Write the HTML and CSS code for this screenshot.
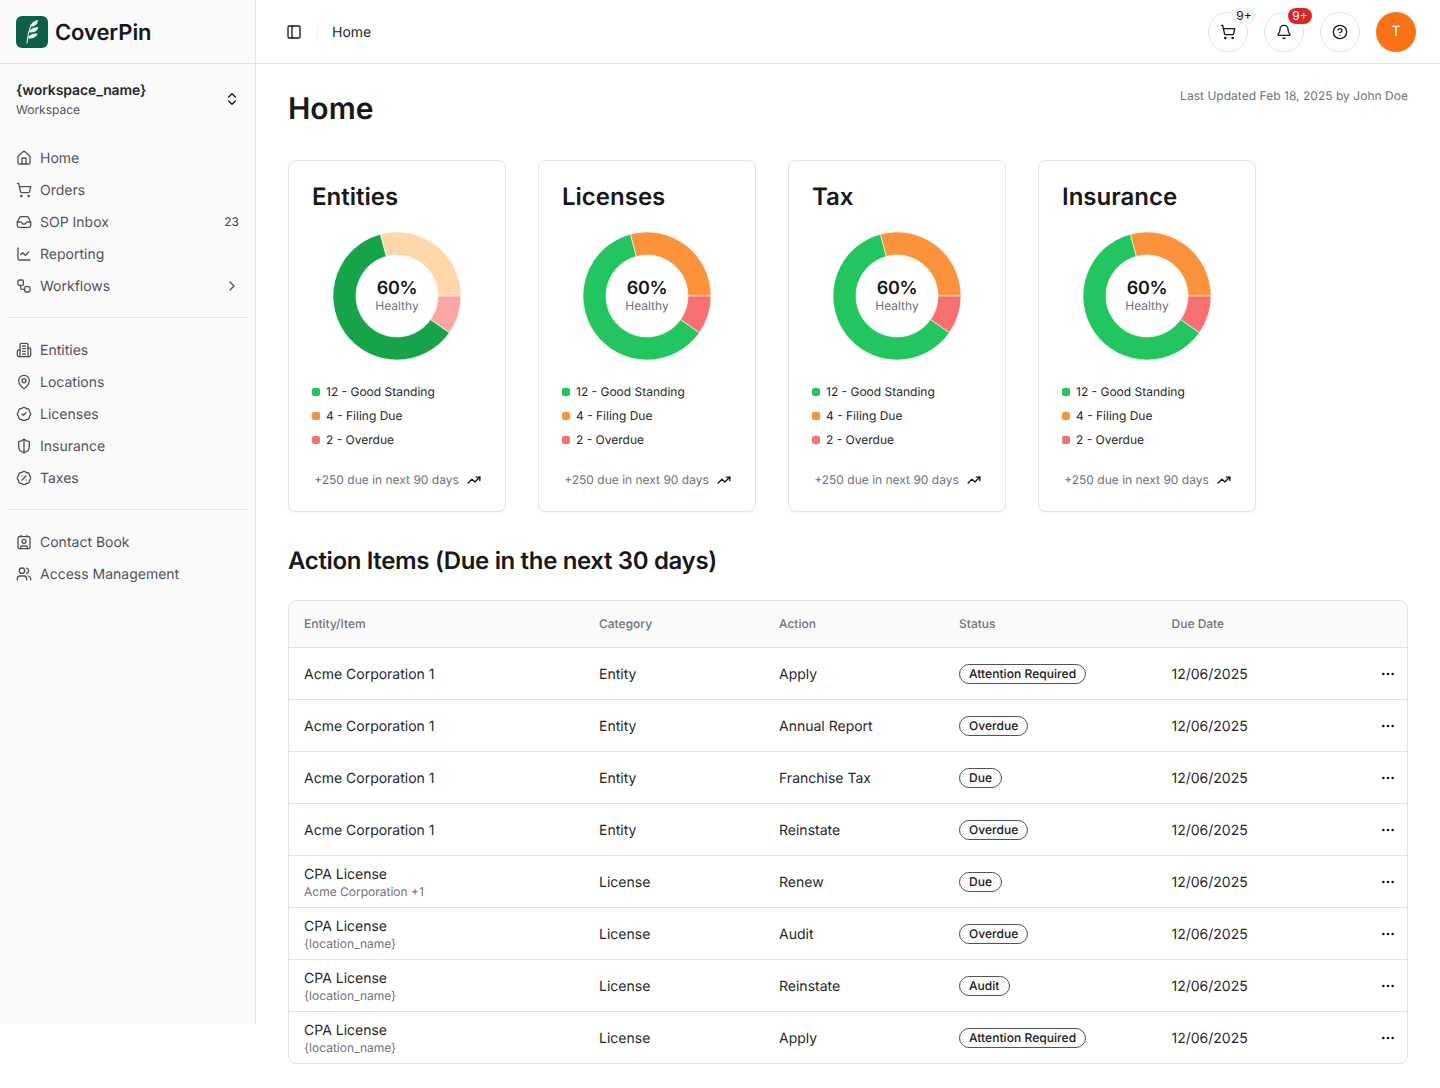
FILE: index.html
```html
<!DOCTYPE html>
<html lang="en">
<head>
<meta charset="utf-8">
<title>CoverPin</title>
<link rel="stylesheet" href="styles.css">
</head>
<body>
<svg class="defs" width="0" height="0" aria-hidden="true">
<defs>
<symbol id="i-home" viewBox="0 0 24 24"><path d="M15 21v-8a1 1 0 0 0-1-1h-4a1 1 0 0 0-1 1v8"/><path d="M3 10a2 2 0 0 1 .709-1.528l7-5.999a2 2 0 0 1 2.582 0l7 5.999A2 2 0 0 1 21 10v9a2 2 0 0 1-2 2H5a2 2 0 0 1-2-2z"/></symbol>
<symbol id="i-cart" viewBox="0 0 24 24"><circle cx="8" cy="21" r="1"/><circle cx="19" cy="21" r="1"/><path d="M2.05 2.05h2l2.66 12.42a2 2 0 0 0 2 1.58h9.78a2 2 0 0 0 1.95-1.57l1.65-7.43H5.12"/></symbol>
<symbol id="i-inbox" viewBox="0 0 24 24"><polyline points="22 12 16 12 14 15 10 15 8 12 2 12"/><path d="M5.45 5.11 2 12v6a2 2 0 0 0 2 2h16a2 2 0 0 0 2-2v-6l-3.45-6.89A2 2 0 0 0 16.76 4H7.24a2 2 0 0 0-1.79 1.11z"/></symbol>
<symbol id="i-chart" viewBox="0 0 24 24"><path d="M3 3v16a2 2 0 0 0 2 2h16"/><path d="m19 9-5 5-4-4-3 3"/></symbol>
<symbol id="i-flow" viewBox="0 0 24 24"><rect width="8" height="8" x="3" y="3" rx="2"/><path d="M7 11v4a2 2 0 0 0 2 2h4"/><rect width="8" height="8" x="13" y="13" rx="2"/></symbol>
<symbol id="i-building" viewBox="0 0 24 24"><path d="M6 22V4a2 2 0 0 1 2-2h8a2 2 0 0 1 2 2v18Z"/><path d="M6 12H4a2 2 0 0 0-2 2v6a2 2 0 0 0 2 2h2"/><path d="M18 9h2a2 2 0 0 1 2 2v9a2 2 0 0 1-2 2h-2"/><path d="M10 6h4M10 10h4M10 14h4M10 18h4"/></symbol>
<symbol id="i-pin" viewBox="0 0 24 24"><path d="M20 10c0 4.993-5.539 10.193-7.399 11.799a1 1 0 0 1-1.202 0C9.539 20.193 4 14.993 4 10a8 8 0 0 1 16 0"/><circle cx="12" cy="10" r="3"/></symbol>
<symbol id="i-check" viewBox="0 0 24 24"><path d="M3.85 8.62a4 4 0 0 1 4.78-4.77 4 4 0 0 1 6.74 0 4 4 0 0 1 4.78 4.78 4 4 0 0 1 0 6.74 4 4 0 0 1-4.77 4.78 4 4 0 0 1-6.75 0 4 4 0 0 1-4.78-4.77 4 4 0 0 1 0-6.76Z"/><path d="m9 12 2 2 4-4"/></symbol>
<symbol id="i-shield" viewBox="0 0 24 24"><path d="M20 13c0 5-3.5 7.5-7.66 8.95a1 1 0 0 1-.67-.01C7.5 20.5 4 18 4 13V6a1 1 0 0 1 1-1c2 0 4.5-1.2 6.24-2.72a1.17 1.17 0 0 1 1.52 0C14.51 3.81 17 5 19 5a1 1 0 0 1 1 1z"/><path d="M12 22V2"/></symbol>
<symbol id="i-percent" viewBox="0 0 24 24"><path d="M3.85 8.62a4 4 0 0 1 4.78-4.77 4 4 0 0 1 6.74 0 4 4 0 0 1 4.78 4.78 4 4 0 0 1 0 6.74 4 4 0 0 1-4.77 4.78 4 4 0 0 1-6.75 0 4 4 0 0 1-4.78-4.77 4 4 0 0 1 0-6.76Z"/><path d="m15 9-6 6"/><path d="M9 9h.01"/><path d="M15 15h.01"/></symbol>
<symbol id="i-contact" viewBox="0 0 24 24"><path d="M16 2v2"/><path d="M7 22v-2a2 2 0 0 1 2-2h6a2 2 0 0 1 2 2v2"/><path d="M8 2v2"/><circle cx="12" cy="11" r="3"/><rect x="3" y="4" width="18" height="18" rx="2"/></symbol>
<symbol id="i-users" viewBox="0 0 24 24"><path d="M16 21v-2a4 4 0 0 0-4-4H6a4 4 0 0 0-4 4v2"/><circle cx="9" cy="7" r="4"/><path d="M22 21v-2a4 4 0 0 0-3-3.87"/><path d="M16 3.13a4 4 0 0 1 0 7.75"/></symbol>
<symbol id="i-updown" viewBox="0 0 24 24"><path d="m7 15 5 5 5-5"/><path d="m7 9 5-5 5 5"/></symbol>
<symbol id="i-right" viewBox="0 0 24 24"><path d="m9 18 6-6-6-6"/></symbol>
<symbol id="i-panel" viewBox="0 0 24 24"><rect width="18" height="18" x="3" y="3" rx="2"/><path d="M9 3v18"/></symbol>
<symbol id="i-bell" viewBox="0 0 24 24"><path d="M10.268 21a2 2 0 0 0 3.464 0"/><path d="M3.262 15.326A1 1 0 0 0 4 17h16a1 1 0 0 0 .74-1.673C19.41 13.956 18 12.499 18 8A6 6 0 0 0 6 8c0 4.499-1.411 5.956-2.738 7.326"/></symbol>
<symbol id="i-help" viewBox="0 0 24 24"><circle cx="12" cy="12" r="10"/><path d="M9.09 9a3 3 0 0 1 5.83 1c0 2-3 3-3 3"/><path d="M12 17h.01"/></symbol>
<symbol id="i-trend" viewBox="0 0 24 24"><polyline points="22 7 13.5 15.5 8.5 10.5 2 17"/><polyline points="16 7 22 7 22 13"/></symbol>
<symbol id="i-dots" viewBox="0 0 24 24"><circle cx="12" cy="12" r="1"/><circle cx="19" cy="12" r="1"/><circle cx="5" cy="12" r="1"/></symbol>
</defs>
</svg>
<div class="app">
  <aside class="sidebar">
    <div class="brand">
      <svg class="logo" viewBox="0 0 32 32">
        <rect width="32" height="32" rx="6" fill="#0f6049"/>
        <path class="logo-stem" d="M11 27C11.400 22 12.600 15 15 9"/>
        <path class="logo-leaf" d="M14.500 10.800C14.800 7.500 17.500 4.800 21.600 4C22.400 7.200 19.800 10.400 14.500 10.800Z"/>
        <path class="logo-leaf" d="M13.200 16.300C13.600 13.300 17 11.500 22 11C22.400 14.500 18.800 17 13.200 16.300Z"/>
        <path class="logo-leaf" d="M12 22.200C12.200 19.200 16 17.400 21.500 17.500C21 20.800 17 23.300 12 22.200Z"/>
      </svg>
      <span class="brand-name">CoverPin</span>
    </div>
    <div class="workspace">
      <div>
        <div class="ws-name">{workspace_name}</div>
        <div class="ws-sub">Workspace</div>
      </div>
      <svg class="ic ic-dark"><use href="#i-updown"/></svg>
    </div>
    <nav class="nav-group">
      <a class="nav-item"><svg class="ic"><use href="#i-home"/></svg><span>Home</span></a>
      <a class="nav-item"><svg class="ic"><use href="#i-cart"/></svg><span>Orders</span></a>
      <a class="nav-item"><svg class="ic"><use href="#i-inbox"/></svg><span>SOP Inbox</span><em class="count">23</em></a>
      <a class="nav-item"><svg class="ic"><use href="#i-chart"/></svg><span>Reporting</span></a>
      <a class="nav-item"><svg class="ic"><use href="#i-flow"/></svg><span>Workflows</span><svg class="ic ic-end"><use href="#i-right"/></svg></a>
    </nav>
    <div class="rule"></div>
    <nav class="nav-group">
      <a class="nav-item"><svg class="ic"><use href="#i-building"/></svg><span>Entities</span></a>
      <a class="nav-item"><svg class="ic"><use href="#i-pin"/></svg><span>Locations</span></a>
      <a class="nav-item"><svg class="ic"><use href="#i-check"/></svg><span>Licenses</span></a>
      <a class="nav-item"><svg class="ic"><use href="#i-shield"/></svg><span>Insurance</span></a>
      <a class="nav-item"><svg class="ic"><use href="#i-percent"/></svg><span>Taxes</span></a>
    </nav>
    <div class="rule"></div>
    <nav class="nav-group">
      <a class="nav-item"><svg class="ic"><use href="#i-contact"/></svg><span>Contact Book</span></a>
      <a class="nav-item"><svg class="ic"><use href="#i-users"/></svg><span>Access Management</span></a>
    </nav>
  </aside>
  <div class="content">
    <header class="topbar">
      <div class="crumbs">
        <svg class="ic ic-dark"><use href="#i-panel"/></svg>
        <span class="crumb-sep"></span>
        <span class="crumb">Home</span>
      </div>
      <div class="actions">
        <button class="round"><svg class="ic ic-dark"><use href="#i-cart"/></svg><span class="pill pill-grey">9+</span></button>
        <button class="round"><svg class="ic ic-dark"><use href="#i-bell"/></svg><span class="pill pill-red">9+</span></button>
        <button class="round"><svg class="ic ic-dark"><use href="#i-help"/></svg></button>
        <div class="avatar">T</div>
      </div>
    </header>
    <main class="main">
      <div class="title-row">
        <h1>Home</h1>
        <p class="updated">Last Updated Feb 18, 2025 by John Doe</p>
      </div>
      <section class="cards">
        <article class="card">
          <h2>Entities</h2>
          <div class="donut">
            <svg viewBox="0 0 128 128" class="donut-svg">
              <path class="seg s-green-d" d="M116.43 100.71A64 64 0 1 1 47.44 2.18L53.39 24.4A41 41 0 1 0 97.59 87.52Z"/>
              <path class="seg s-orange-l" d="M47.44 2.18A64 64 0 0 1 128 64H105A41 41 0 0 0 53.39 24.4Z"/>
              <path class="seg s-red-l" d="M128 64A64 64 0 0 1 116.43 100.71L97.59 87.52A41 41 0 0 0 105 64Z"/>
            </svg>
            <div class="donut-label"><strong>60%</strong><span>Healthy</span></div>
          </div>
          <ul class="legend">
            <li><i class="dot d-green"></i>12 - Good Standing</li>
            <li><i class="dot d-orange"></i>4 - Filing Due</li>
            <li><i class="dot d-red"></i>2 - Overdue</li>
          </ul>
          <div class="due">+250 due in next 90 days<svg class="ic-trend"><use href="#i-trend"/></svg></div>
        </article>
        <article class="card">
          <h2>Licenses</h2>
          <div class="donut">
            <svg viewBox="0 0 128 128" class="donut-svg">
              <path class="seg s-green" d="M116.43 100.71A64 64 0 1 1 47.44 2.18L53.39 24.4A41 41 0 1 0 97.59 87.52Z"/>
              <path class="seg s-orange" d="M47.44 2.18A64 64 0 0 1 128 64H105A41 41 0 0 0 53.39 24.4Z"/>
              <path class="seg s-red" d="M128 64A64 64 0 0 1 116.43 100.71L97.59 87.52A41 41 0 0 0 105 64Z"/>
            </svg>
            <div class="donut-label"><strong>60%</strong><span>Healthy</span></div>
          </div>
          <ul class="legend">
            <li><i class="dot d-green"></i>12 - Good Standing</li>
            <li><i class="dot d-orange"></i>4 - Filing Due</li>
            <li><i class="dot d-red"></i>2 - Overdue</li>
          </ul>
          <div class="due">+250 due in next 90 days<svg class="ic-trend"><use href="#i-trend"/></svg></div>
        </article>
        <article class="card">
          <h2>Tax</h2>
          <div class="donut">
            <svg viewBox="0 0 128 128" class="donut-svg">
              <path class="seg s-green" d="M116.43 100.71A64 64 0 1 1 47.44 2.18L53.39 24.4A41 41 0 1 0 97.59 87.52Z"/>
              <path class="seg s-orange" d="M47.44 2.18A64 64 0 0 1 128 64H105A41 41 0 0 0 53.39 24.4Z"/>
              <path class="seg s-red" d="M128 64A64 64 0 0 1 116.43 100.71L97.59 87.52A41 41 0 0 0 105 64Z"/>
            </svg>
            <div class="donut-label"><strong>60%</strong><span>Healthy</span></div>
          </div>
          <ul class="legend">
            <li><i class="dot d-green"></i>12 - Good Standing</li>
            <li><i class="dot d-orange"></i>4 - Filing Due</li>
            <li><i class="dot d-red"></i>2 - Overdue</li>
          </ul>
          <div class="due">+250 due in next 90 days<svg class="ic-trend"><use href="#i-trend"/></svg></div>
        </article>
        <article class="card">
          <h2>Insurance</h2>
          <div class="donut">
            <svg viewBox="0 0 128 128" class="donut-svg">
              <path class="seg s-green" d="M116.43 100.71A64 64 0 1 1 47.44 2.18L53.39 24.4A41 41 0 1 0 97.59 87.52Z"/>
              <path class="seg s-orange" d="M47.44 2.18A64 64 0 0 1 128 64H105A41 41 0 0 0 53.39 24.4Z"/>
              <path class="seg s-red" d="M128 64A64 64 0 0 1 116.43 100.71L97.59 87.52A41 41 0 0 0 105 64Z"/>
            </svg>
            <div class="donut-label"><strong>60%</strong><span>Healthy</span></div>
          </div>
          <ul class="legend">
            <li><i class="dot d-green"></i>12 - Good Standing</li>
            <li><i class="dot d-orange"></i>4 - Filing Due</li>
            <li><i class="dot d-red"></i>2 - Overdue</li>
          </ul>
          <div class="due">+250 due in next 90 days<svg class="ic-trend"><use href="#i-trend"/></svg></div>
        </article>
      </section>
      <h2 class="section-title">Action Items (Due in the next 30 days)</h2>
      <div class="table-wrap">
        <table class="items">
          <colgroup><col class="c1"><col class="c2"><col class="c3"><col class="c4"><col class="c5"><col class="c6"></colgroup>
          <thead><tr><th>Entity/Item</th><th>Category</th><th>Action</th><th>Status</th><th>Due Date</th><th></th></tr></thead>
          <tbody>
            <tr><td>Acme Corporation 1</td><td>Entity</td><td>Apply</td><td class="status"><span class="tag">Attention Required</span></td><td>12/06/2025</td><td class="more"><svg class="ic ic-dark"><use href="#i-dots"/></svg></td></tr>
            <tr><td>Acme Corporation 1</td><td>Entity</td><td>Annual Report</td><td class="status"><span class="tag">Overdue</span></td><td>12/06/2025</td><td class="more"><svg class="ic ic-dark"><use href="#i-dots"/></svg></td></tr>
            <tr><td>Acme Corporation 1</td><td>Entity</td><td>Franchise Tax</td><td class="status"><span class="tag">Due</span></td><td>12/06/2025</td><td class="more"><svg class="ic ic-dark"><use href="#i-dots"/></svg></td></tr>
            <tr><td>Acme Corporation 1</td><td>Entity</td><td>Reinstate</td><td class="status"><span class="tag">Overdue</span></td><td>12/06/2025</td><td class="more"><svg class="ic ic-dark"><use href="#i-dots"/></svg></td></tr>
            <tr><td class="stack"><div class="two">CPA License</div><div class="sub">Acme Corporation +1</div></td><td>License</td><td>Renew</td><td class="status"><span class="tag">Due</span></td><td>12/06/2025</td><td class="more"><svg class="ic ic-dark"><use href="#i-dots"/></svg></td></tr>
            <tr><td class="stack"><div class="two">CPA License</div><div class="sub">{location_name}</div></td><td>License</td><td>Audit</td><td class="status"><span class="tag">Overdue</span></td><td>12/06/2025</td><td class="more"><svg class="ic ic-dark"><use href="#i-dots"/></svg></td></tr>
            <tr><td class="stack"><div class="two">CPA License</div><div class="sub">{location_name}</div></td><td>License</td><td>Reinstate</td><td class="status"><span class="tag">Audit</span></td><td>12/06/2025</td><td class="more"><svg class="ic ic-dark"><use href="#i-dots"/></svg></td></tr>
            <tr><td class="stack"><div class="two">CPA License</div><div class="sub">{location_name}</div></td><td>License</td><td>Apply</td><td class="status"><span class="tag">Attention Required</span></td><td>12/06/2025</td><td class="more"><svg class="ic ic-dark"><use href="#i-dots"/></svg></td></tr>
          </tbody>
        </table>
      </div>
    </main>
  </div>
</div>
</body>
</html>
```
FILE: styles.css
```css
* { box-sizing: border-box; }
html, body { margin: 0; padding: 0; background: #fff; }
body { font-family: Inter, "Liberation Sans", sans-serif; color: #18181b; font-size: 14px; text-rendering: geometricPrecision; }
.defs { position: absolute; }
.app { display: flex; align-items: flex-start; }

.ic { width: 16px; height: 16px; flex: none; fill: none; stroke: #52525b; stroke-width: 2; stroke-linecap: round; stroke-linejoin: round; }
.ic-dark { stroke: #18181b; }
.ic-end { margin-left: auto; }

.sidebar { width: 256px; height: 1024px; flex: none; background: #fafafa; box-shadow: inset -1px 0 0 #e4e4e7; }
.brand { height: 64px; display: flex; align-items: center; gap: 7px; padding: 0 16px; border-bottom: 1px solid #e4e4e7; }
.logo { width: 32px; height: 32px; flex: none; }
.logo-leaf { fill: #eef3f0; }
.logo-stem { fill: none; stroke: #eef3f0; stroke-width: 1.1; stroke-linecap: round; }
.brand-name { font-size: 22px; font-weight: 600; letter-spacing: -0.1px; color: #18181b; padding-top: 2px; }
.workspace { display: flex; align-items: center; justify-content: space-between; height: 78px; padding: 0 16px 8px; }
.ws-name { font-size: 14px; font-weight: 600; color: #27272a; line-height: 20px; letter-spacing: -0.1px; padding-top: 1px; }
.ws-sub { font-size: 12px; color: #52525b; line-height: 16px; margin-top: 1px; }
.nav-group { display: flex; flex-direction: column; padding: 0 8px; }
.nav-item { display: flex; align-items: center; gap: 8px; height: 32px; padding: 0 8px; color: #52525b; font-size: 14px; }
.count { margin-left: auto; margin-right: 1px; font-style: normal; font-size: 12px; color: #3f3f46; padding-bottom: 1px; }
.rule { height: 1px; margin: 15px 8px 16px; background: #e4e4e7; }

.content { flex: 1; min-width: 0; }
.topbar { height: 64px; display: flex; align-items: center; justify-content: space-between; padding: 0 24px 0 30px; border-bottom: 1px solid #e4e4e7; }
.crumbs { display: flex; align-items: center; }
.crumb-sep { width: 1px; height: 16px; background: #f0f0f2; margin: 0 14px 0 15px; }
.crumb { font-size: 14px; color: #27272a; padding-top: 2px; }
.actions { display: flex; align-items: center; gap: 16px; }
.round { position: relative; width: 40px; height: 40px; padding: 0; display: flex; align-items: center; justify-content: center; background: #fff; border: 1px solid #e4e4e7; border-radius: 50%; }
.pill { position: absolute; top: -5px; right: -9px; width: 24px; height: 16px; border-radius: 8px; font-family: Inter, sans-serif; font-size: 12px; line-height: 16px; text-align: center; }
.pill-grey { background: #f4f4f5; color: #18181b; }
.pill-red { background: #dc2626; color: #fff; }
.avatar { width: 40px; height: 40px; border-radius: 50%; background: #f97316; color: #fff; display: flex; align-items: center; justify-content: center; font-size: 14px; }

.main { padding: 24px 32px 24px; }
.title-row { display: flex; justify-content: space-between; align-items: flex-start; height: 72px; }
h1 { margin: 1px 0 0; font-size: 30px; line-height: 40px; font-weight: 600; color: #18181b; }
.updated { margin: 0; font-size: 12px; line-height: 16px; color: #71717a; letter-spacing: .03px; }

.cards { display: flex; gap: 32px; }
.card { width: 218px; height: 352px; padding: 23px 23px 0; background: #fff; border: 1px solid #e4e4e7; border-radius: 8px; box-shadow: 0 1px 2px rgba(0,0,0,.05); display: flex; flex-direction: column; }
.card h2 { margin: 0; font-size: 24px; line-height: 26px; font-weight: 600; color: #18181b; }
.donut { position: relative; width: 128px; height: 128px; margin: 22px auto 0; }
.donut-svg { display: block; width: 128px; height: 128px; }
.seg { stroke: #fff; stroke-width: .6; }
.s-green { fill: #22c55e; }
.s-orange { fill: #fb923c; }
.s-red { fill: #f87171; }
.s-green-d { fill: #16a34a; }
.s-orange-l { fill: #fed7aa; }
.s-red-l { fill: #fca5a5; }
.donut-label { position: absolute; inset: 0; display: flex; flex-direction: column; align-items: center; justify-content: center; }
.donut-label strong { font-size: 18px; line-height: 20px; font-weight: 600; letter-spacing: -0.3px; color: #18181b; margin-bottom: -1px; }
.donut-label span { font-size: 12px; line-height: 16px; color: #71717a; }
.legend { list-style: none; margin: 19px 0 0; padding: 0; }
.legend li { display: flex; align-items: center; gap: 6px; height: 24px; font-size: 12px; color: #27272a; }
.dot { width: 8px; height: 8px; border-radius: 2px; flex: none; margin-top: 2px; }
.d-green { background: #22c55e; }
.d-orange { background: #fb923c; }
.d-red { background: #f87171; }
.due { display: flex; align-items: center; justify-content: center; gap: 8px; margin-top: 16px; height: 24px; padding-left: 1px; font-size: 12px; color: #71717a; }
.ic-trend { width: 14px; height: 14px; flex: none; margin-top: 2px; fill: none; stroke: #18181b; stroke-width: 2.4; stroke-linecap: round; stroke-linejoin: round; }

.section-title { margin: 32px 0 23px; font-size: 24px; line-height: 33px; font-weight: 600; letter-spacing: -0.35px; color: #18181b; }
.table-wrap { border: 1px solid #e4e4e7; border-radius: 8px; overflow: hidden; }
.items { width: 100%; table-layout: fixed; border-collapse: separate; border-spacing: 0; }
.c1 { width: 295px; }
.c2, .c3 { width: 180px; }
.c4 { width: 212.5px; }
.c5 { width: 180px; }
.items th { height: 47px; padding: 0 0 2px 15px; background: #fafafa; border-bottom: 1px solid #e4e4e7; text-align: left; font-size: 12px; font-weight: 500; color: #71717a; }
.items td { height: 52px; padding: 2px 0 0 15px; border-bottom: 1px solid #e4e4e7; font-size: 14px; color: #27272a; vertical-align: middle; }
.items td.status, .items td.stack { padding-top: 0; }
.items tbody tr:last-child td { height: 51px; border-bottom: 0; }
.items td.more { padding: 0 11px 0 0; }
.more .ic { display: block; margin-left: auto; }
.two { line-height: 18px; margin-top: 2px; }
.sub { font-size: 12px; line-height: 16px; color: #71717a; }
.tag { display: inline-block; height: 20px; padding: 0 9px; border: 1px solid #52525b; border-radius: 10px; font-size: 12px; font-weight: 500; line-height: 18px; letter-spacing: .05px; color: #18181b; background: #fafafa; vertical-align: middle; }
```
